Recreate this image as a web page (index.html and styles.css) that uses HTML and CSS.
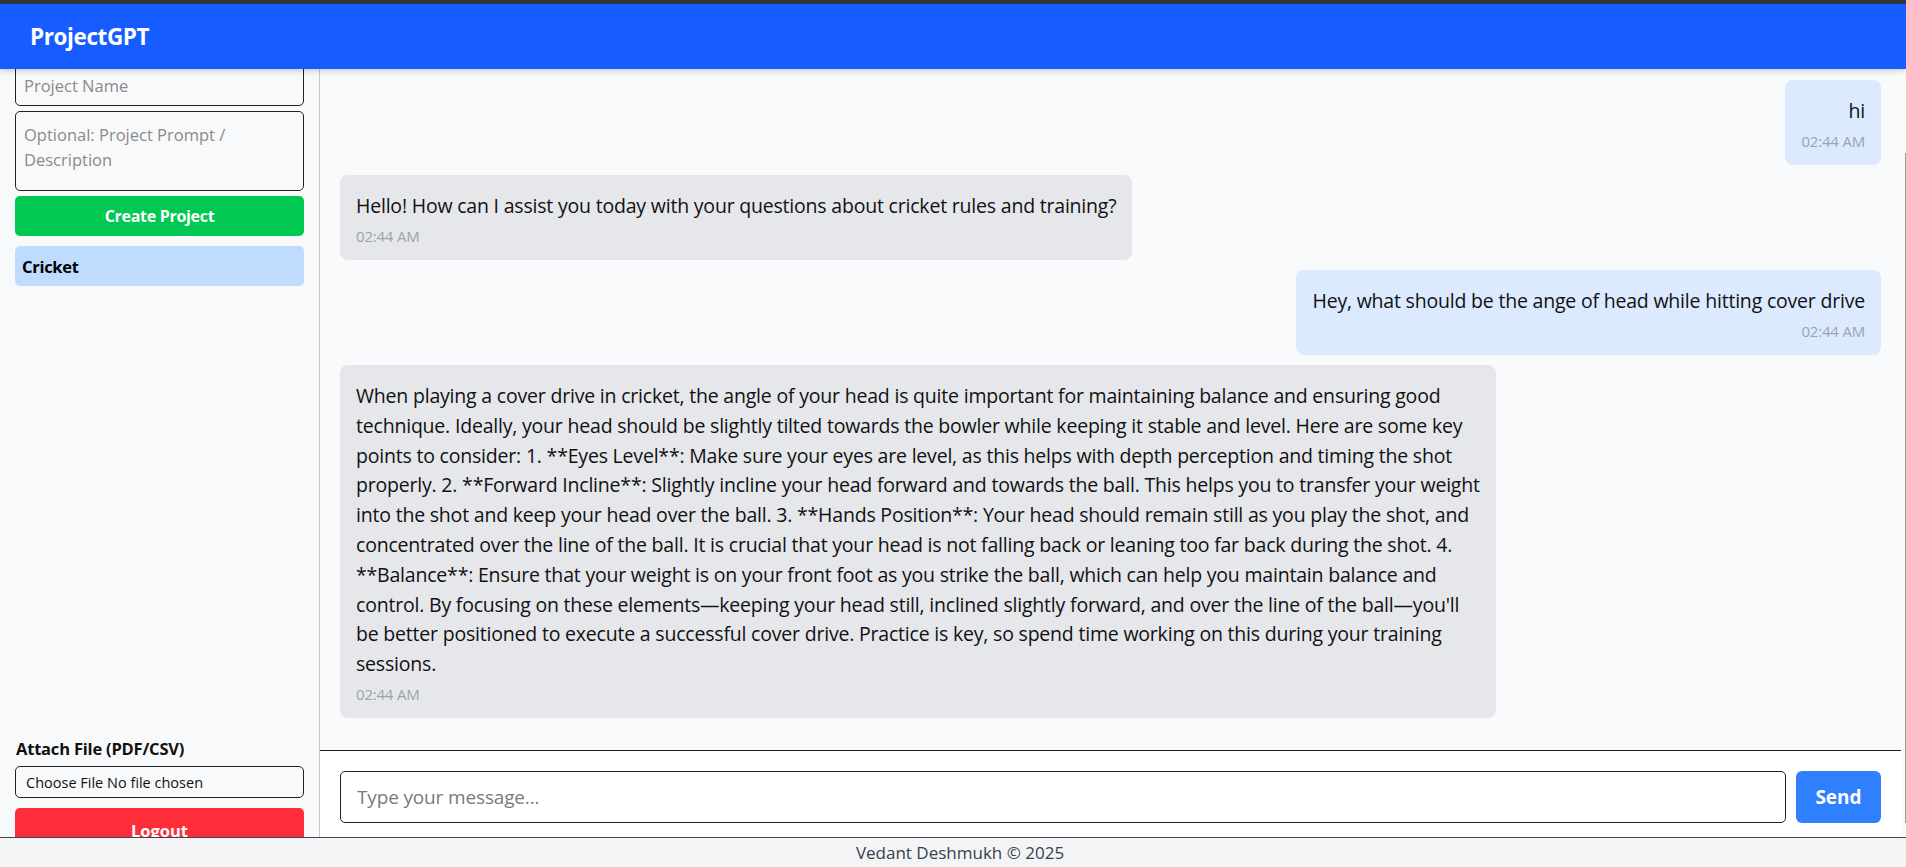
FILE: index.html
```html
<!DOCTYPE html>
<html lang="en">
<head>
<meta charset="utf-8">
<title>ProjectGPT</title>
<link rel="stylesheet" href="styles.css">
</head>
<body>
<div class="top-strip"></div>
<header class="app-header">
  <h1 class="brand">ProjectGPT</h1>
</header>
<div class="app-main">
  <aside class="sidebar">
    <div class="sidebar-top">
      <div class="field field-name"><span class="placeholder">Project Name</span></div>
      <div class="field field-prompt"><span class="placeholder">Optional: Project Prompt / Description</span></div>
      <button class="btn btn-create">Create Project</button>
      <div class="project-item">Cricket</div>
    </div>
    <div class="sidebar-bottom">
      <div class="attach-label">Attach File (PDF/CSV)</div>
      <div class="file-box">Choose File No file chosen</div>
      <button class="btn btn-logout">Logout</button>
    </div>
  </aside>
  <section class="chat">
    <div class="messages">
      <div class="bubble user">
        <div class="msg-text">hi</div>
        <div class="msg-time">02:44 AM</div>
      </div>
      <div class="bubble bot">
        <div class="msg-text">Hello! How can I assist you today with your questions about cricket rules and training?</div>
        <div class="msg-time">02:44 AM</div>
      </div>
      <div class="bubble user">
        <div class="msg-text">Hey, what should be the ange of head while hitting cover drive</div>
        <div class="msg-time">02:44 AM</div>
      </div>
      <div class="bubble bot wide">
        <div class="msg-text">When playing a cover drive in cricket, the angle of your head is quite important for maintaining balance and ensuring good<br>technique. Ideally, your head should be slightly tilted towards the bowler while keeping it stable and level. Here are some key<br>points to consider: 1. **Eyes Level**: Make sure your eyes are level, as this helps with depth perception and timing the shot<br>properly. 2. **Forward Incline**: Slightly incline your head forward and towards the ball. This helps you to transfer your weight<br>into the shot and keep your head over the ball. 3. **Hands Position**: Your head should remain still as you play the shot, and<br>concentrated over the line of the ball. It is crucial that your head is not falling back or leaning too far back during the shot. 4.<br>**Balance**: Ensure that your weight is on your front foot as you strike the ball, which can help you maintain balance and<br>control. By focusing on these elements—keeping your head still, inclined slightly forward, and over the line of the ball—you'll<br>be better positioned to execute a successful cover drive. Practice is key, so spend time working on this during your training<br>sessions.</div>
        <div class="msg-time">02:44 AM</div>
      </div>
    </div>
    <div class="composer">
      <div class="composer-input"><span class="placeholder">Type your message...</span></div>
      <button class="btn btn-send">Send</button>
    </div>
  </section>
  <div class="scroll-edge"><div class="scroll-thumb"></div></div>
</div>
<footer class="app-footer">Vedant Deshmukh © 2025</footer>
</body>
</html>
```
FILE: styles.css
```css
* { box-sizing: border-box; }
html, body { height: 100%; }
body {
  margin: 0;
  font-family: "Open Sans", "Noto Sans", Arial, sans-serif;
  color: #111;
  display: flex;
  flex-direction: column;
  overflow: hidden;
  background: #f9fafb;
}
.top-strip { height: 4px; background: #30363a; flex: none; }
.app-header {
  flex: none;
  height: 65px;
  background: #175cff;
  display: flex;
  align-items: center;
  padding-left: 30px;
  position: relative;
  z-index: 2;
  box-shadow: 0 2px 6px rgba(0, 0, 0, 0.18);
}
.brand {
  margin: 0;
  color: #fff;
  font-size: 22.5px;
  font-weight: 700;
  letter-spacing: -0.4px;
}
.app-main {
  flex: 1;
  min-height: 0;
  display: flex;
}
.sidebar {
  width: 320px;
  flex: none;
  background: #f8f9fa;
  border-right: 1px solid #c9c9c9;
  padding: 0 15px 15px;
  display: flex;
  flex-direction: column;
  overflow: hidden;
}
.sidebar-top { display: flex; flex-direction: column; }
.field {
  border: 1px solid #222;
  border-radius: 5px;
  background: #f8f9fa;
  font-size: 16.5px;
  color: #8a8a8a;
  padding: 0 8px;
}
.field-name {
  margin-top: -5px;
  height: 42px;
  display: flex;
  align-items: center;
}
.field-prompt {
  margin-top: 5px;
  height: 80px;
  padding-top: 10px;
  line-height: 25px;
  padding-right: 40px;
}
.btn {
  border: none;
  color: #fff;
  font-family: inherit;
  font-weight: 700;
  cursor: pointer;
  display: flex;
  align-items: center;
  justify-content: center;
}
.btn-create {
  margin-top: 5px;
  height: 40px;
  background: #00c853;
  border-radius: 5px;
  font-size: 16px;
  letter-spacing: -0.3px;
}
.project-item {
  margin-top: 10px;
  height: 40px;
  background: #bfdbfe;
  border-radius: 5px;
  padding-left: 7px;
  display: flex;
  align-items: center;
  font-weight: 700;
  font-size: 16.5px;
  color: #000;
  letter-spacing: -0.3px;
}
.sidebar-bottom {
  margin-top: auto;
  display: flex;
  flex-direction: column;
}
.attach-label {
  font-weight: 700;
  font-size: 16.5px;
  line-height: 24px;
  margin-bottom: 5px;
  padding-left: 1px;
  letter-spacing: -0.2px;
}
.file-box {
  height: 32px;
  border: 1px solid #222;
  border-radius: 5px;
  font-size: 14.5px;
  padding-left: 10px;
  display: flex;
  align-items: center;
  color: #111;
}
.btn-logout {
  margin-top: 10px;
  height: 44px;
  background: #ff2d3a;
  border-radius: 5px;
  font-size: 16.5px;
}
.chat {
  flex: 1;
  min-width: 0;
  display: flex;
  flex-direction: column;
  background: #f9fafb;
  padding-bottom: 30px;
}
.messages {
  flex: 1;
  min-height: 0;
  overflow: hidden;
  padding: 11px 20px;
  display: flex;
  flex-direction: column;
  gap: 10px;
}
.bubble {
  max-width: 75%;
  padding: 16px 16px 15px;
  border-radius: 8px;
}
.bubble.wide { width: 75%; }
.bubble.user { align-self: flex-end; background: #dbeafe; text-align: right; }
.bubble.bot { align-self: flex-start; background: #e5e7eb; }
.msg-text {
  font-size: 19.5px;
  line-height: 30px;
  letter-spacing: -0.2px;
  color: #111;
}
.wide .msg-text { line-height: 29.8px; white-space: nowrap; }
.msg-time {
  margin-top: 6px;
  font-size: 15px;
  line-height: 18px;
  color: #9ca3af;
  letter-spacing: -0.2px;
}
.composer {
  flex: none;
  background: #fff;
  border-top: 1px solid #1c1c1c;
  padding: 20px 20px 14px;
  display: flex;
  gap: 10px;
}
.composer-input {
  flex: 1;
  height: 52px;
  border: 1px solid #222;
  border-radius: 5px;
  padding-left: 16px;
  display: flex;
  align-items: center;
  font-size: 19px;
  color: #7a7a7a;
  letter-spacing: -0.15px;
}
.btn-send {
  width: 85px;
  height: 52px;
  background: #2f80ff;
  border-radius: 6px;
  font-size: 19px;
}
.scroll-edge {
  width: 5px;
  flex: none;
  background: #fafafa;
  padding-top: 84px;
}
.scroll-thumb {
  margin-left: 4px;
  width: 1px;
  height: 670px;
  background: #9a9a9a;
}
.app-footer {
  position: fixed;
  left: 0;
  right: 0;
  bottom: 0;
  height: 30px;
  padding-left: 14px;
  background: #f3f4f6;
  border-top: 1px solid #3f4650;
  color: #374151;
  font-size: 17px;
  text-align: center;
  line-height: 29px;
  z-index: 3;
}
```
